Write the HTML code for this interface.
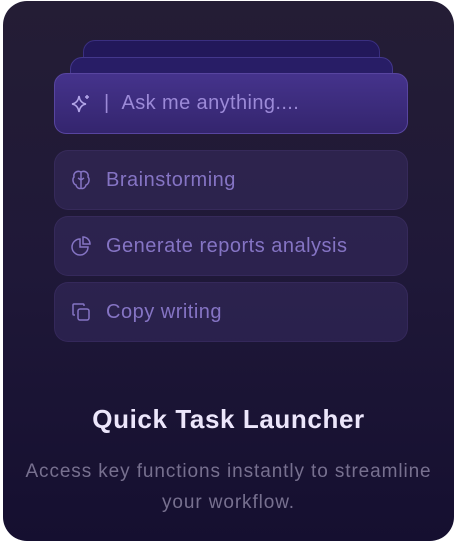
<!DOCTYPE html><html><head><style>
body{margin:0;width:458px;height:544px;background:#fff;font-family:"Liberation Sans",sans-serif;overflow:hidden}
.card{position:absolute;left:3px;top:1px;width:451px;height:540px;border-radius:24px;background:linear-gradient(180deg,#241d35 0%,#1f1838 50%,#150f30 100%);overflow:hidden}
.b{position:absolute;border-radius:12px}
.item{position:absolute;left:51px;width:354px;height:60px;border-radius:14px;background:rgba(70,55,120,.35);border:1px solid rgba(120,100,190,.12);box-sizing:border-box;color:#8574c4;font-size:20px;letter-spacing:.5px;display:flex;align-items:center}
.item svg{margin-left:15px;margin-right:14px}
</style></head><body><div class="card">
<div class="b" style="left:80px;top:39px;width:295px;height:40px;background:#22185a;border:1px solid #3a2f80"></div>
<div class="b" style="left:67px;top:56px;width:321px;height:40px;background:#281d66;border:1px solid #43378c"></div>
<div class="b" style="left:51px;top:72px;width:354px;height:61px;background:linear-gradient(180deg,#45338c,#34256e);border:1px solid #5845a0;box-sizing:border-box;display:flex;align-items:center;color:#a896e6;font-size:20px;letter-spacing:.4px">
<svg width="22" height="22" viewBox="0 0 22 22" style="margin-left:15px;margin-right:12px" fill="none" stroke="#b3a6e8" stroke-width="1.5"><path d="M9 3 Q10 10 16 11 Q10 12 9 19 Q8 12 2 11 Q8 10 9 3Z"/><path d="M17 2v4M15 4h4"/></svg><span style="color:#9c8ad8">|&nbsp;&nbsp;Ask me anything....</span></div>
<div class="item" style="top:149px"><svg width="22" height="22" viewBox="0 0 22 22" fill="none" stroke="#8574c4" stroke-width="1.5"><path d="M11 3C7 1 3 4 4 8 2 10 3 15 6 16 7 20 11 20 11 19 11 20 15 20 16 16 19 15 20 10 18 8 19 4 15 1 11 3Z"/><path d="M11 3v16M8 9l3 2 3-2"/></svg>Brainstorming</div>
<div class="item" style="top:215px"><svg width="22" height="22" viewBox="0 0 22 22" fill="none" stroke="#8574c4" stroke-width="1.5"><path d="M10 4a8 8 0 1 0 8 8h-8z"/><path d="M13 2a7 7 0 0 1 7 7h-7z"/></svg>Generate reports analysis</div>
<div class="item" style="top:281px"><svg width="22" height="22" viewBox="0 0 22 22" fill="none" stroke="#8574c4" stroke-width="1.5"><rect x="8" y="8" width="11" height="11" rx="2"/><path d="M5 14H4a1 1 0 0 1-1-1V4a1 1 0 0 1 1-1h9a1 1 0 0 1 1 1v1"/></svg>Copy writing</div>
<div style="position:absolute;left:0;width:451px;top:403px;text-align:center;color:#ece6fb;font-size:26px;font-weight:bold;letter-spacing:.6px">Quick Task Launcher</div>
<div style="position:absolute;left:10px;width:431px;top:455px;text-align:center;color:#77708f;font-size:19px;letter-spacing:.9px;line-height:31px">Access key functions instantly to streamline<br>your workflow.</div>
</div></body></html>
